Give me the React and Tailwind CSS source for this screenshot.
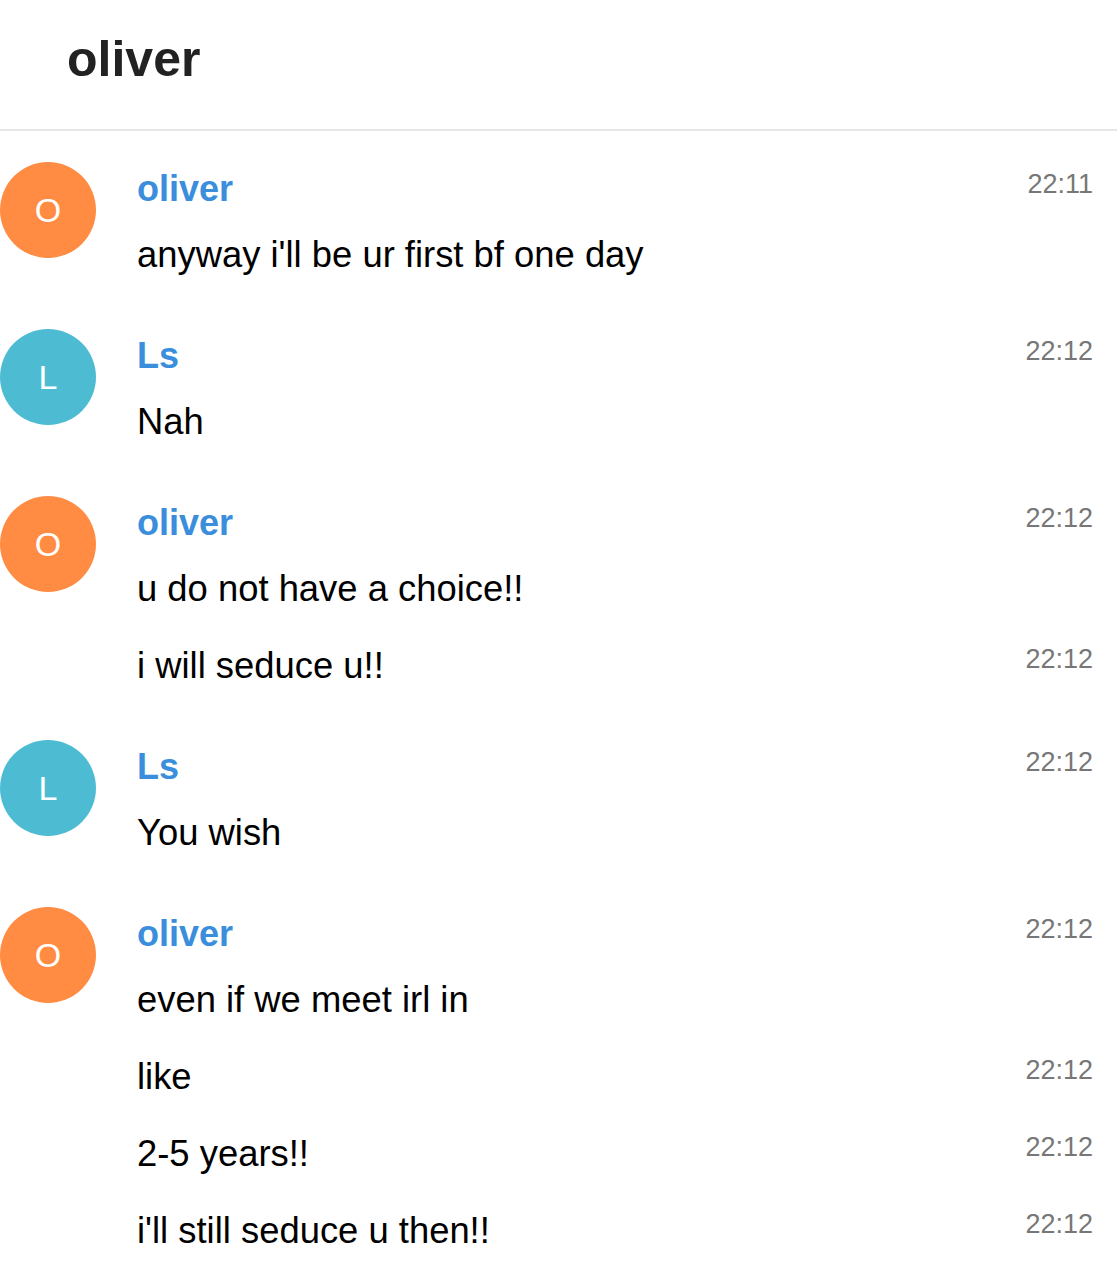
import React from 'react';

const groups = [
  {
    name: 'oliver',
    color: 'orange',
    time: '22:11',
    messages: [{ text: "anyway i'll be ur first bf one day" }],
  },
  {
    name: 'Ls',
    color: 'teal',
    time: '22:12',
    messages: [{ text: 'Nah' }],
  },
  {
    name: 'oliver',
    color: 'orange',
    time: '22:12',
    messages: [{ text: 'u do not have a choice!!' }, { text: 'i will seduce u!!', time: '22:12' }],
  },
  {
    name: 'Ls',
    color: 'teal',
    time: '22:12',
    messages: [{ text: 'You wish' }],
  },
  {
    name: 'oliver',
    color: 'orange',
    time: '22:12',
    messages: [
      { text: 'even if we meet irl in' },
      { text: 'like', time: '22:12' },
      { text: '2-5 years!!', time: '22:12' },
      { text: "i'll still seduce u then!!", time: '22:12' },
    ],
  },
];

const Avatar = ({ name, color }) => (
  <div
    className={`mt-px flex h-[96px] w-[96px] shrink-0 items-center justify-center rounded-full text-[34px] text-white ${
      color === 'orange' ? 'bg-[#ff8c42]' : 'bg-[#4dbcd3]'
    }`}
  >
    {name[0].toUpperCase()}
  </div>
);

const Time = ({ children, className }) => (
  <span className={`shrink-0 text-[27px] leading-[32px] text-[#777777] ${className}`}>{children}</span>
);

export default function App() {
  return (
    <div className="min-h-screen bg-white font-['Liberation_Sans',Arial,sans-serif]">
      {/* header */}
      <div className="border-b-2 border-[#e6e6e6] pl-[67px] pt-[31px] pb-[42px]">
        <h1 className="text-[50px] font-bold leading-[56px] text-[#222222]">oliver</h1>
      </div>

      {/* messages */}
      <div className="flex flex-col gap-[35px] pt-[30px] pr-[24px]">
        {groups.map((group, i) => (
          <div key={i} className="flex gap-[41px]">
            <Avatar name={group.name} color={group.color} />
            <div className="flex min-w-0 flex-1 flex-col">
              <div className="flex h-[55px] items-start justify-between">
                <span className="-mt-[1px] text-[36px] font-bold leading-[57px] text-[#3a8edb]">{group.name}</span>
                <Time className="mt-[7px]">{group.time}</Time>
              </div>
              {group.messages.map((msg, j) => (
                <div key={j} className="flex h-[77px] items-start justify-between">
                  <span className="text-[36.4px] leading-[77px] text-black">{msg.text}</span>
                  {msg.time && <Time className="mt-[16px]">{msg.time}</Time>}
                </div>
              ))}
            </div>
          </div>
        ))}
      </div>
    </div>
  );
}
